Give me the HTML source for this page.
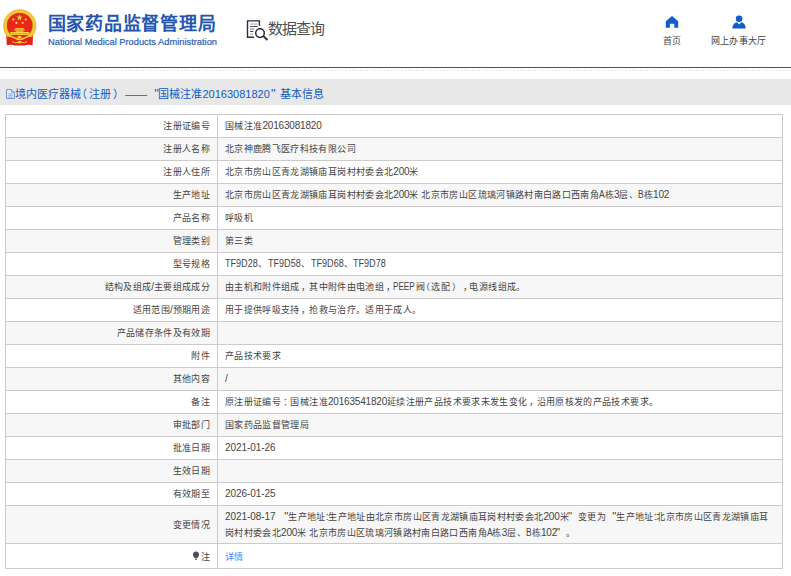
<!DOCTYPE html>
<html lang="zh-CN">
<head>
<meta charset="utf-8">
<style>
html,body{margin:0;padding:0;background:#fff;}
body{width:791px;height:576px;overflow:hidden;position:relative;font-family:"Liberation Sans",sans-serif;}
.abs{position:absolute;}
#title{left:47.5px;top:12px;font-size:18px;font-weight:700;color:#2456b0;line-height:24px;white-space:nowrap;letter-spacing:0.8px;}
#sub{left:48px;top:36px;font-size:9.3px;color:#2d5db5;-webkit-text-stroke:0.2px #2d5db5;line-height:12px;white-space:nowrap;}
#sj{left:267.5px;top:18.5px;font-size:15px;letter-spacing:-1px;color:#505050;line-height:20px;white-space:nowrap;}
.nav{font-size:9px;letter-spacing:0.35px;color:#444;line-height:12px;white-space:nowrap;}
#blue{left:0;top:67px;width:791px;height:1px;background:#0a5cc6;}
#dash{left:0;top:69px;width:791px;height:1px;background:repeating-linear-gradient(90deg,#efefef 0 1.5px,#fff 1.5px 3.5px);}
#dash2{left:-1px;top:70px;width:792px;height:1px;background:repeating-linear-gradient(90deg,#eaeaea 0 1.5px,#fff 1.5px 3.5px);}
#bar{left:0;top:79px;width:791px;height:26px;background:#e8e8e8;}
#crumb{left:6px;top:85.5px;font-size:11px;color:#0e5bc6;line-height:16px;white-space:nowrap;}
#crumb q{quotes:none;font-size:13px;}
#crumb q.o{margin-left:4.2px;margin-right:-0.4px;}
#crumb q.c{margin-left:1.2px;margin-right:1.4px;}
table{position:absolute;left:5px;top:114px;border-collapse:collapse;width:778px;table-layout:fixed;font-size:9px;letter-spacing:0.35px;color:#444;}
i{font-style:normal;font-size:10px;letter-spacing:-0.18px;}
b.s{display:inline-block;font-weight:normal;letter-spacing:0;font-size:10px;white-space:nowrap;transform-origin:0 50%;}
q{quotes:none;font-size:11.5px;letter-spacing:0;}
q.o{margin-left:6px;}
q.c{margin-left:-1px;margin-right:6px;}
td{border:1px solid #cdcacc;height:22px;padding:0;line-height:15px;vertical-align:middle;white-space:nowrap;}
td.l{width:204px;text-align:right;padding-right:7px;}
td.v{padding-left:7px;}
tr:nth-child(even) td{background:#f7f7f7;}
tr.two td{height:37px;white-space:normal;}
tr.two td.l{padding-top:2px;height:35px;}
tr.last td{height:22px;padding-top:2px;}
a{color:#3c8dfa;text-decoration:none;}
s.pc{text-decoration:none;position:relative;left:1.6px;}
</style>
</head>
<body>
<svg class="abs" style="left:0;top:0" width="40" height="50" viewBox="0 0 40 50">
  <circle cx="19.7" cy="25.9" r="16.6" fill="#eeb52a"/>
  <circle cx="19.7" cy="25.9" r="15.6" fill="#f5ca35"/>
  <circle cx="19.7" cy="25.6" r="13.2" fill="#c9a22a"/>
  <circle cx="19.7" cy="25.6" r="12.7" fill="#e9261c"/>
  <polygon points="19.5,14.4 20.3,16.6 22.6,16.6 20.7,18 21.4,20.3 19.5,18.9 17.6,20.3 18.3,18 16.4,16.6 18.7,16.6" fill="#f7d83a"/>
  <circle cx="13.3" cy="19.6" r="1.15" fill="#f7d83a"/>
  <circle cx="25.8" cy="19.6" r="1.15" fill="#f7d83a"/>
  <circle cx="16.4" cy="22.9" r="1.15" fill="#f7d83a"/>
  <circle cx="22.7" cy="22.9" r="1.15" fill="#f7d83a"/>
  <rect x="15.2" y="28.2" width="8.6" height="1.2" fill="#f7d83a"/>
  <rect x="14.1" y="29.6" width="10.8" height="1" fill="#f5cf3a"/>
  <rect x="15.8" y="30.6" width="7.6" height="1.2" fill="#f3c63a"/>
  <rect x="10.2" y="32" width="19" height="1.2" fill="#f7d83a"/>
  <rect x="9.6" y="33.3" width="20.2" height="1.6" fill="#f5cf3a"/>
  <path d="M6.3 35.6 Q12 36.2 15 38 Q19.7 40.6 24.4 38 Q27.4 36.2 33 35.6 L32.6 45.2 Q27 44 25 45.6 L14.5 45.6 Q12.5 44 6.8 45.2 Z" fill="#e2221b"/>
  <path d="M7 35.8 Q12 36.4 15 38.2 Q19.7 41 24.4 38.2 Q27.4 36.4 32.4 35.8" fill="none" stroke="#f5ca35" stroke-width="1.5"/>
  <ellipse cx="19.5" cy="36.9" rx="2.2" ry="1.2" fill="#f5ca35"/>
  <ellipse cx="19.5" cy="42.3" rx="2.4" ry="1.2" fill="#f5cf3a"/>
  <path d="M12 41.5 L14.5 42.8 L17 42.3 M27 41.5 L24.5 42.8 L22 42.3" stroke="#f5cf3a" stroke-width="1" fill="none"/>
</svg>
<div id="title" class="abs">国家药品监督管理局</div>
<div id="sub" class="abs">National Medical Products Administration</div>

<svg class="abs" style="left:246px;top:19px" width="24" height="23" viewBox="0 0 24 23">
  <path d="M8 18.3 H1.5 V1.9 H13.4 V6.8" fill="none" stroke="#2c2c3a" stroke-width="1.4"/>
  <rect x="4" y="4.6" width="7.6" height="0.9" fill="#9a9aa2"/>
  <rect x="4" y="7.05" width="7.6" height="0.9" fill="#3c3c48"/>
  <rect x="4" y="9.6" width="4.4" height="0.9" fill="#6c6c76"/>
  <rect x="4" y="12.05" width="3.4" height="0.9" fill="#3c3c48"/>
  <rect x="4" y="14.6" width="3.1" height="0.9" fill="#9a9aa2"/>
  <circle cx="14" cy="14.1" r="4.3" fill="none" stroke="#2c2c3a" stroke-width="1.5"/>
  <path d="M17.2 16.8 L21.4 21" stroke="#2c2c3a" stroke-width="1.9"/>
</svg>
<div id="sj" class="abs">数据查询</div>

<svg class="abs" style="left:665px;top:15px" width="14" height="13" viewBox="0 0 14 13">
  <path d="M0.8 6.2 L7 0.9 L13.2 6.2 V12.8 H9.3 V8.7 H4.9 V12.8 H0.8 Z" fill="#0d5ecb"/>
</svg>
<div class="abs nav" style="left:662.5px;top:35px">首页</div>
<svg class="abs" style="left:731px;top:14px" width="16" height="16" viewBox="0 0 16 16">
  <circle cx="8.1" cy="4.8" r="3.3" fill="#0d5ecb"/>
  <path d="M1.4 14.5 C1.4 10.5 4 8.4 6 8.2 L8.1 10.6 L10.2 8.2 C12.2 8.4 14.7 10.5 14.7 14.5 Z" fill="#0d5ecb"/>
</svg>
<div class="abs nav" style="left:710.5px;top:35px">网上办事大厅</div>

<div id="blue" class="abs"></div>
<div id="dash" class="abs"></div><div id="dash2" class="abs"></div>
<div id="bar" class="abs"></div>
<div id="crumb" class="abs"><svg width="9" height="10" viewBox="0 0 9 10" style="vertical-align:-1px"><path d="M0.5 0.5 H5.6 L8.4 3.3 V9.5 H0.5 Z" fill="none" stroke="#5b8fdc" stroke-width="0.9"/><path d="M5.5 0.6 V3.4 H8.3" fill="none" stroke="#5b8fdc" stroke-width="0.7"/><path d="M2.2 4.9 H6.6 M2.2 6.6 H6.6 M2.2 8.2 H6.6" stroke="#6f9de0" stroke-width="0.7"/></svg>境内医疗器械<span style="margin-left:-5px;margin-right:1.5px">（</span>注册<span style="margin-left:2.2px;margin-right:1.3px">）</span>—— <q class="o">"</q>国械注准20163081820<q class="c">"</q> 基本信息</div>

<table>
<tr><td class="l">注册证编号</td><td class="v">国械注准<i>20163081820</i></td></tr>
<tr><td class="l">注册人名称</td><td class="v">北京神鹿腾飞医疗科技有限公司</td></tr>
<tr><td class="l">注册人住所</td><td class="v">北京市房山区青龙湖镇庙耳岗村村委会北<i>200</i>米</td></tr>
<tr><td class="l">生产地址</td><td class="v">北京市房山区青龙湖镇庙耳岗村村委会北<i>200</i>米<i> </i>北京市房山区琉璃河镇路村南白路口西南角<b class="s" style="width:5.6px;transform:scaleX(.85)">A</b>栋<i>3</i>层、<b class="s" style="width:5.6px;transform:scaleX(.85)">B</b>栋<i>102</i></td></tr>
<tr><td class="l">产品名称</td><td class="v">呼吸机</td></tr>
<tr><td class="l">管理类别</td><td class="v">第三类</td></tr>
<tr><td class="l">型号规格</td><td class="v"><b class="s" style="width:33.4px;transform:scaleX(.905)">TF9D28</b>、<b class="s" style="width:33.4px;transform:scaleX(.905)">TF9D58</b>、<b class="s" style="width:33.4px;transform:scaleX(.905)">TF9D68</b>、<b class="s" style="width:33.4px;transform:scaleX(.905)">TF9D78</b></td></tr>
<tr><td class="l">结构及组成<i>/</i>主要组成成分</td><td class="v">由主机和附件组成<s class="pc">，</s>其中附件由电池组<s class="pc">，</s><b class="s" style="width:22.3px;transform:scaleX(.81)">PEEP</b>阀<span style="margin-left:-4px;margin-right:0.8px">（</span>选配<span style="margin-left:2.5px;margin-right:2.4px">）</span><s class="pc" style="left:3.2px">，</s>电源线组成。</td></tr>
<tr><td class="l">适用范围<i>/</i>预期用途</td><td class="v">用于提供呼吸支持<s class="pc">，</s>抢救与治疗。适用于成人。</td></tr>
<tr><td class="l">产品储存条件及有效期</td><td class="v"></td></tr>
<tr><td class="l">附件</td><td class="v">产品技术要求</td></tr>
<tr><td class="l">其他内容</td><td class="v"><i>/</i></td></tr>
<tr><td class="l">备注</td><td class="v">原注册证编号<s class="pc">：</s>国械注准<i>20163541820</i>延续注册产品技术要求未发生变化<s class="pc">，</s>沿用原核发的产品技术要求。</td></tr>
<tr><td class="l">审批部门</td><td class="v">国家药品监督管理局</td></tr>
<tr><td class="l">批准日期</td><td class="v"><i style="letter-spacing:-0.06px">2021-01-26</i></td></tr>
<tr><td class="l">生效日期</td><td class="v"></td></tr>
<tr><td class="l">有效期至</td><td class="v"><i style="letter-spacing:-0.06px">2026-01-25</i></td></tr>
<tr class="two"><td class="l">变更情况</td><td class="v"><i style="letter-spacing:-0.06px">2021-08-17 </i><q class="o">"</q>生产地址<i>:</i>生产地址由北京市房山区青龙湖镇庙耳岗村村委会北<i>200</i>米<q class="c">"</q>变更为<q class="o">"</q>生产地址<i>:</i>北京市房山区青龙湖镇庙耳<br>岗村村委会北<i>200</i>米<i> </i>北京市房山区琉璃河镇路村南白路口西南角<b class="s" style="width:5.6px;transform:scaleX(.85)">A</b>栋<i>3</i>层、<b class="s" style="width:5.6px;transform:scaleX(.85)">B</b>栋<i>102</i><q class="c">"</q>。</td></tr>
<tr class="last"><td class="l"><svg width="8" height="10" viewBox="0 0 8 10" style="vertical-align:-1.5px;margin-right:1px"><path d="M4 0.6 C6 0.6 7.1 2.1 7.1 3.8 C7.1 5.3 5.9 6.3 5.1 7.3 H2.9 C2.1 6.3 0.9 5.3 0.9 3.8 C0.9 2.1 2 0.6 4 0.6 Z" fill="#4f4f55"/><rect x="3" y="7.8" width="2" height="1.2" fill="#6a6a70"/></svg>注</td><td class="v"><a>详情</a></td></tr>
</table>
</body>
</html>
